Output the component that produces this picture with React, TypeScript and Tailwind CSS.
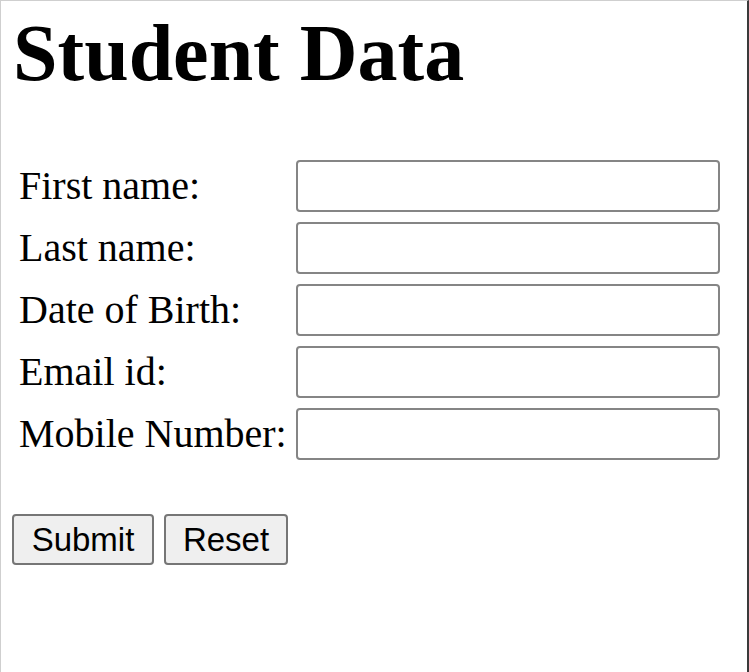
import React from 'react'

const fields = ['First name:', 'Last name:', 'Date of Birth:', 'Email id:', 'Mobile Number:']

function Field({ label }: { label: string }) {
    return (
        <div className='flex items-center h-[52px]'>
            <label className='w-[295px] shrink-0 pl-[18px] text-[40px] leading-[46px] whitespace-nowrap'>{label}</label>
            <input
                type='text'
                className='w-[424px] shrink-0 h-[52px] border-2 border-[#858585] rounded-[4px] bg-white outline-none'
            />
        </div>
    )
}

export default function App() {
    return (
        <div className='w-[749px] h-[672px] bg-white text-black border-t border-l border-t-[#cfcfcf] border-l-[#cfcfcf] border-r-2 border-r-[#3a3a3a] overflow-hidden'
            style={{ fontFamily: '"Liberation Serif", "Times New Roman", serif' }}>
            <h1 className='mt-[8px] ml-[12px] text-[80px] font-bold leading-[88px]'>Student Data</h1>

            <form className='mt-[63px] flex flex-col gap-[10px]'>
                {fields.map((f) => (
                    <Field key={f} label={f} />
                ))}

                <div className='flex gap-[10px] ml-[11px] mt-[44px]'
                    style={{ fontFamily: '"Liberation Sans", Arial, sans-serif' }}>
                    <button type='submit' className='w-[142px] h-[51px] bg-[#efefef] border-2 border-[#767676] rounded-[4px] text-[33px] leading-none'>
                        Submit
                    </button>
                    <button type='reset' className='w-[124px] h-[51px] bg-[#efefef] border-2 border-[#767676] rounded-[4px] text-[33px] leading-none'>
                        Reset
                    </button>
                </div>
            </form>
        </div>
    )
}
